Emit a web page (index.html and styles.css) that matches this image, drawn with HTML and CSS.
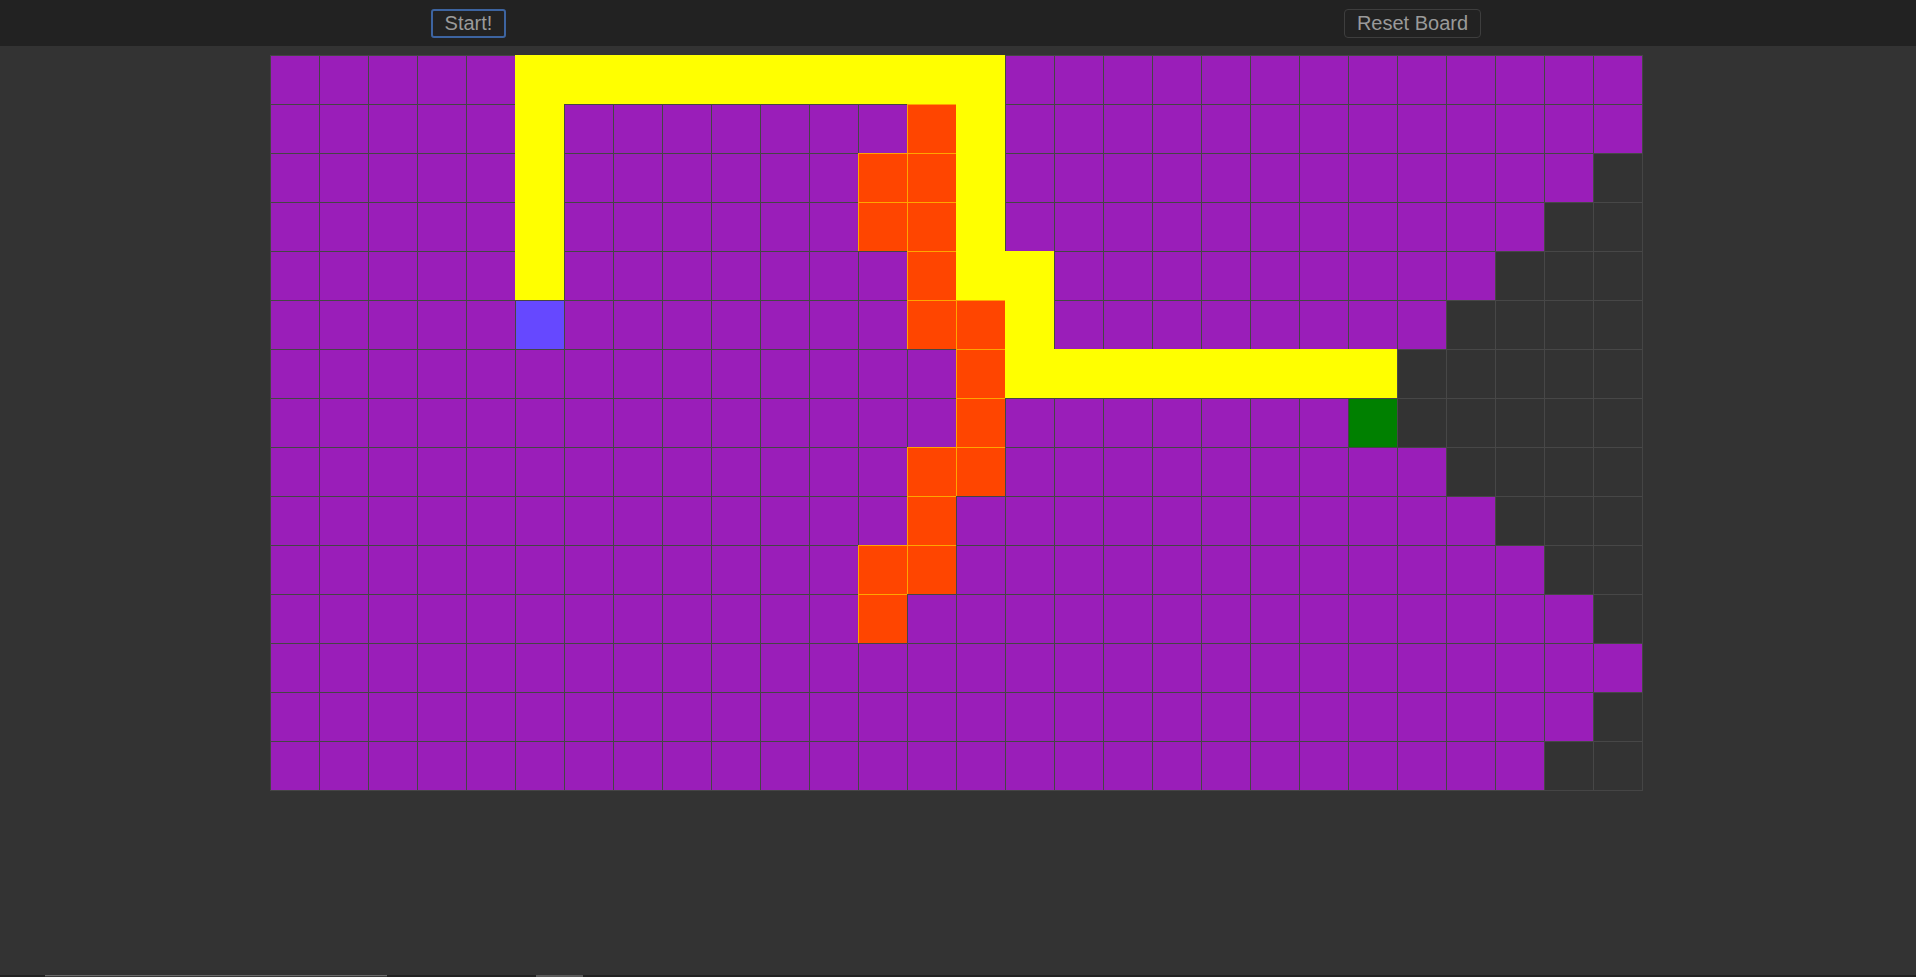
FILE: index.html
```html
<!DOCTYPE html>
<html lang="en">
<head>
<meta charset="utf-8">
<title>Pathfinding Visualizer</title>
<link rel="stylesheet" href="styles.css">
</head>
<body>
<header class="topbar">
  <button class="btn btn-start">Start!</button>
  <button class="btn btn-reset">Reset Board</button>
</header>
<main class="board-wrap">
  <div class="board">
    <!-- row 0 -->
    <div class="n p"></div><div class="n p"></div><div class="n p"></div><div class="n p"></div><div class="n p"></div><div class="n y"></div><div class="n y"></div><div class="n y"></div><div class="n y"></div><div class="n y"></div><div class="n y"></div><div class="n y"></div><div class="n y"></div><div class="n y"></div><div class="n y"></div><div class="n p"></div><div class="n p"></div><div class="n p"></div><div class="n p"></div><div class="n p"></div><div class="n p"></div><div class="n p"></div><div class="n p"></div><div class="n p"></div><div class="n p"></div><div class="n p"></div><div class="n p"></div><div class="n p"></div>
    <!-- row 1 -->
    <div class="n p"></div><div class="n p"></div><div class="n p"></div><div class="n p"></div><div class="n p"></div><div class="n y"></div><div class="n p"></div><div class="n p"></div><div class="n p"></div><div class="n p"></div><div class="n p"></div><div class="n p"></div><div class="n p"></div><div class="n o"></div><div class="n y"></div><div class="n p"></div><div class="n p"></div><div class="n p"></div><div class="n p"></div><div class="n p"></div><div class="n p"></div><div class="n p"></div><div class="n p"></div><div class="n p"></div><div class="n p"></div><div class="n p"></div><div class="n p"></div><div class="n p"></div>
    <!-- row 2 -->
    <div class="n p"></div><div class="n p"></div><div class="n p"></div><div class="n p"></div><div class="n p"></div><div class="n y"></div><div class="n p"></div><div class="n p"></div><div class="n p"></div><div class="n p"></div><div class="n p"></div><div class="n p"></div><div class="n o"></div><div class="n o"></div><div class="n y"></div><div class="n p"></div><div class="n p"></div><div class="n p"></div><div class="n p"></div><div class="n p"></div><div class="n p"></div><div class="n p"></div><div class="n p"></div><div class="n p"></div><div class="n p"></div><div class="n p"></div><div class="n p"></div><div class="n u"></div>
    <!-- row 3 -->
    <div class="n p"></div><div class="n p"></div><div class="n p"></div><div class="n p"></div><div class="n p"></div><div class="n y"></div><div class="n p"></div><div class="n p"></div><div class="n p"></div><div class="n p"></div><div class="n p"></div><div class="n p"></div><div class="n o"></div><div class="n o"></div><div class="n y"></div><div class="n p"></div><div class="n p"></div><div class="n p"></div><div class="n p"></div><div class="n p"></div><div class="n p"></div><div class="n p"></div><div class="n p"></div><div class="n p"></div><div class="n p"></div><div class="n p"></div><div class="n u"></div><div class="n u"></div>
    <!-- row 4 -->
    <div class="n p"></div><div class="n p"></div><div class="n p"></div><div class="n p"></div><div class="n p"></div><div class="n y"></div><div class="n p"></div><div class="n p"></div><div class="n p"></div><div class="n p"></div><div class="n p"></div><div class="n p"></div><div class="n p"></div><div class="n o"></div><div class="n y"></div><div class="n y"></div><div class="n p"></div><div class="n p"></div><div class="n p"></div><div class="n p"></div><div class="n p"></div><div class="n p"></div><div class="n p"></div><div class="n p"></div><div class="n p"></div><div class="n u"></div><div class="n u"></div><div class="n u"></div>
    <!-- row 5 -->
    <div class="n p"></div><div class="n p"></div><div class="n p"></div><div class="n p"></div><div class="n p"></div><div class="n s"></div><div class="n p"></div><div class="n p"></div><div class="n p"></div><div class="n p"></div><div class="n p"></div><div class="n p"></div><div class="n p"></div><div class="n o"></div><div class="n o"></div><div class="n y"></div><div class="n p"></div><div class="n p"></div><div class="n p"></div><div class="n p"></div><div class="n p"></div><div class="n p"></div><div class="n p"></div><div class="n p"></div><div class="n u"></div><div class="n u"></div><div class="n u"></div><div class="n u"></div>
    <!-- row 6 -->
    <div class="n p"></div><div class="n p"></div><div class="n p"></div><div class="n p"></div><div class="n p"></div><div class="n p"></div><div class="n p"></div><div class="n p"></div><div class="n p"></div><div class="n p"></div><div class="n p"></div><div class="n p"></div><div class="n p"></div><div class="n p"></div><div class="n o"></div><div class="n y"></div><div class="n y"></div><div class="n y"></div><div class="n y"></div><div class="n y"></div><div class="n y"></div><div class="n y"></div><div class="n y"></div><div class="n u"></div><div class="n u"></div><div class="n u"></div><div class="n u"></div><div class="n u"></div>
    <!-- row 7 -->
    <div class="n p"></div><div class="n p"></div><div class="n p"></div><div class="n p"></div><div class="n p"></div><div class="n p"></div><div class="n p"></div><div class="n p"></div><div class="n p"></div><div class="n p"></div><div class="n p"></div><div class="n p"></div><div class="n p"></div><div class="n p"></div><div class="n o"></div><div class="n p"></div><div class="n p"></div><div class="n p"></div><div class="n p"></div><div class="n p"></div><div class="n p"></div><div class="n p"></div><div class="n t"></div><div class="n u"></div><div class="n u"></div><div class="n u"></div><div class="n u"></div><div class="n u"></div>
    <!-- row 8 -->
    <div class="n p"></div><div class="n p"></div><div class="n p"></div><div class="n p"></div><div class="n p"></div><div class="n p"></div><div class="n p"></div><div class="n p"></div><div class="n p"></div><div class="n p"></div><div class="n p"></div><div class="n p"></div><div class="n p"></div><div class="n o"></div><div class="n o"></div><div class="n p"></div><div class="n p"></div><div class="n p"></div><div class="n p"></div><div class="n p"></div><div class="n p"></div><div class="n p"></div><div class="n p"></div><div class="n p"></div><div class="n u"></div><div class="n u"></div><div class="n u"></div><div class="n u"></div>
    <!-- row 9 -->
    <div class="n p"></div><div class="n p"></div><div class="n p"></div><div class="n p"></div><div class="n p"></div><div class="n p"></div><div class="n p"></div><div class="n p"></div><div class="n p"></div><div class="n p"></div><div class="n p"></div><div class="n p"></div><div class="n p"></div><div class="n o"></div><div class="n p"></div><div class="n p"></div><div class="n p"></div><div class="n p"></div><div class="n p"></div><div class="n p"></div><div class="n p"></div><div class="n p"></div><div class="n p"></div><div class="n p"></div><div class="n p"></div><div class="n u"></div><div class="n u"></div><div class="n u"></div>
    <!-- row 10 -->
    <div class="n p"></div><div class="n p"></div><div class="n p"></div><div class="n p"></div><div class="n p"></div><div class="n p"></div><div class="n p"></div><div class="n p"></div><div class="n p"></div><div class="n p"></div><div class="n p"></div><div class="n p"></div><div class="n o"></div><div class="n o"></div><div class="n p"></div><div class="n p"></div><div class="n p"></div><div class="n p"></div><div class="n p"></div><div class="n p"></div><div class="n p"></div><div class="n p"></div><div class="n p"></div><div class="n p"></div><div class="n p"></div><div class="n p"></div><div class="n u"></div><div class="n u"></div>
    <!-- row 11 -->
    <div class="n p"></div><div class="n p"></div><div class="n p"></div><div class="n p"></div><div class="n p"></div><div class="n p"></div><div class="n p"></div><div class="n p"></div><div class="n p"></div><div class="n p"></div><div class="n p"></div><div class="n p"></div><div class="n o"></div><div class="n p"></div><div class="n p"></div><div class="n p"></div><div class="n p"></div><div class="n p"></div><div class="n p"></div><div class="n p"></div><div class="n p"></div><div class="n p"></div><div class="n p"></div><div class="n p"></div><div class="n p"></div><div class="n p"></div><div class="n p"></div><div class="n u"></div>
    <!-- row 12 -->
    <div class="n p"></div><div class="n p"></div><div class="n p"></div><div class="n p"></div><div class="n p"></div><div class="n p"></div><div class="n p"></div><div class="n p"></div><div class="n p"></div><div class="n p"></div><div class="n p"></div><div class="n p"></div><div class="n p"></div><div class="n p"></div><div class="n p"></div><div class="n p"></div><div class="n p"></div><div class="n p"></div><div class="n p"></div><div class="n p"></div><div class="n p"></div><div class="n p"></div><div class="n p"></div><div class="n p"></div><div class="n p"></div><div class="n p"></div><div class="n p"></div><div class="n p"></div>
    <!-- row 13 -->
    <div class="n p"></div><div class="n p"></div><div class="n p"></div><div class="n p"></div><div class="n p"></div><div class="n p"></div><div class="n p"></div><div class="n p"></div><div class="n p"></div><div class="n p"></div><div class="n p"></div><div class="n p"></div><div class="n p"></div><div class="n p"></div><div class="n p"></div><div class="n p"></div><div class="n p"></div><div class="n p"></div><div class="n p"></div><div class="n p"></div><div class="n p"></div><div class="n p"></div><div class="n p"></div><div class="n p"></div><div class="n p"></div><div class="n p"></div><div class="n p"></div><div class="n u"></div>
    <!-- row 14 -->
    <div class="n p"></div><div class="n p"></div><div class="n p"></div><div class="n p"></div><div class="n p"></div><div class="n p"></div><div class="n p"></div><div class="n p"></div><div class="n p"></div><div class="n p"></div><div class="n p"></div><div class="n p"></div><div class="n p"></div><div class="n p"></div><div class="n p"></div><div class="n p"></div><div class="n p"></div><div class="n p"></div><div class="n p"></div><div class="n p"></div><div class="n p"></div><div class="n p"></div><div class="n p"></div><div class="n p"></div><div class="n p"></div><div class="n p"></div><div class="n u"></div><div class="n u"></div>
  </div>
</main>
<footer class="bottom">
  <div class="bottom-track"></div>
  <div class="bottom-thumb"></div>
</footer>
</body>
</html>
```

FILE: styles.css
```css
* { box-sizing: border-box; }

html, body {
  margin: 0;
  padding: 0;
  height: 100%;
}

body {
  background: #333333;
  font-family: "Liberation Sans", Arial, sans-serif;
  display: flex;
  flex-direction: column;
  height: 977px;
  overflow: hidden;
}

.topbar {
  height: 46px;
  flex: 0 0 46px;
  background: #222222;
  display: flex;
  align-items: center;
  justify-content: space-around;
  padding: 0 16px 0 12px;
}

.btn {
  font-family: "Liberation Sans", Arial, sans-serif;
  font-size: 20px;
  line-height: 23px;
  color: #9a9a9a;
  background: #222222;
  height: 29px;
  padding: 0;
  white-space: nowrap;
  text-align: center;
  cursor: pointer;
}

.btn-start {
  border: 2px solid #3d64a0;
  border-radius: 3px;
  width: 75px;
}

.btn-reset {
  border: 1px solid #3e3e3e;
  border-radius: 4px;
  width: 137px;
}

.board-wrap {
  flex: 1 1 auto;
  padding: 9px 0 0 270px;
}

.board {
  display: grid;
  grid-template-columns: repeat(28, 49px);
  grid-auto-rows: 49px;
  width: 1373px;
  border-right: 1px solid #454545;
  border-bottom: 1px solid #454545;
}

.n {
  border-top: 1px solid #454545;
  border-left: 1px solid #454545;
}

.p { background: #9a1eb9; }
.u { background: #333333; border-color: #474747; }
.y { background: #ffff00; border-color: #ffff00; }
.o { background: #ff4500; border-color: #ffa500; }
.s { background: #6648ff; }
.t { background: #008000; }

.bottom {
  flex: 0 0 2px;
  height: 2px;
  background: #222222;
  display: flex;
  padding-left: 45px;
}

.bottom-track {
  width: 342px;
  height: 2px;
  border-top: 1px solid #6a6a6a;
  background: #3a3a3a;
}

.bottom-thumb {
  width: 47px;
  height: 2px;
  margin-left: 149px;
  background: #5a5a5a;
}
```
